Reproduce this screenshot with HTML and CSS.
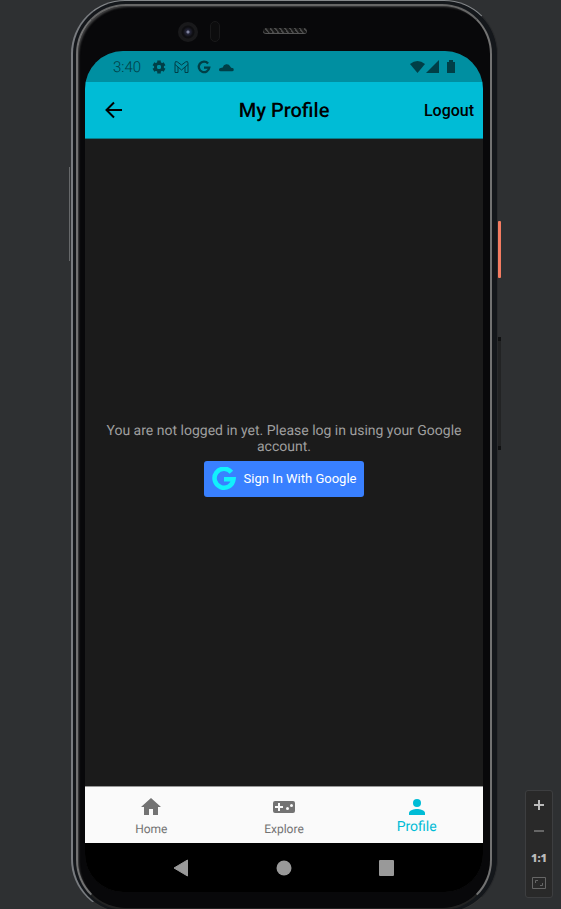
FILE: index.html
```html
<!DOCTYPE html>
<html lang="en">
<head>
<meta charset="utf-8">
<meta name="viewport" content="width=device-width, initial-scale=1">
<title>My Profile</title>
<link rel="stylesheet" href="styles.css">
</head>
<body>
<main class="stage">
  <div class="phone">
    <span class="side-key left-key"></span>
    <span class="side-key power-key"></span>
    <span class="side-key volume-key"></span>
    <div class="rim">
      <div class="bezel">
        <span class="camera"></span>
        <span class="sensor"></span>
        <span class="speaker"></span>
      </div>
      <div class="screen">
        <div class="status">
          <span class="clock">3:40</span>
          <svg class="status-icon" viewBox="0 0 24 24"><g stroke="currentColor" stroke-width="6"><path d="M12 1v6M12 17v6M2.500 6.500l5 3M16.500 14.500l5 3M2.500 17.500l5-3M16.500 9.500l5-3"/></g><circle cx="12" cy="12" r="6" fill="none" stroke="currentColor" stroke-width="5"/><circle cx="12" cy="12" r="3.500" fill="#008fa1"/></svg>
          <svg class="status-icon gmail" viewBox="0 0 15 14"><path fill="none" stroke="currentColor" d="M1 12.500V3Q1 .500 3.500 2L7.500 5l4-3Q14 .500 14 3v9.500h-3V7l-3.500 3L4 7v5.500zM4 7 1 4.500M11 7l3-2.500"/></svg>
          <svg class="status-icon" viewBox="0 0 24 24"><path fill="none" stroke="currentColor" stroke-width="4" d="M19 6a9 9 0 1 0 2 7h-9"/></svg>
          <svg class="status-icon cloud" viewBox="0 0 28 24"><path fill="currentColor" d="M3 20a3 3 0 0 1 0-6q2-1 4-1a7.500 7.500 0 0 1 14-2q1 2 3 3a3 3 0 0 1 1 6z"/></svg>
          <span class="signals">
            <svg width="15" height="14" viewBox="0 0 15 14"><path fill="currentColor" d="M0 4q7.500-6 15 0L7.500 13z"/></svg>
            <svg width="14" height="14" viewBox="0 0 14 14"><path fill="currentColor" d="M13 0v13H0z"/></svg>
            <svg class="battery" width="8" height="14" viewBox="0 0 8 14"><path fill="currentColor" d="M0 2h2V0h4v2h2v11H0z"/></svg>
          </span>
        </div>
        <header class="app-bar">
          <button class="back" type="button" aria-label="Back"><svg width="18" height="18" viewBox="0 0 18 18"><path fill="none" stroke="currentColor" stroke-width="2" d="M17 9H2M9 1.500 1.500 9 9 16.500"/></svg></button>
          <h1>My Profile</h1>
          <button class="logout" type="button">Logout</button>
        </header>
        <section class="content">
          <p>You are not logged in yet. Please log in using your Google account.</p>
          <button class="google" type="button">
            <svg width="24" height="24" viewBox="0 0 24 24"><path fill="none" stroke="currentColor" stroke-width="4.500" d="M19.400 5.200A9.500 9.500 0 1 0 21.500 12.300H12"/></svg>
            <span>Sign In With Google</span>
          </button>
        </section>
        <nav class="tabs">
          <a href="#home"><svg width="24" height="24" viewBox="0 0 24 24"><path fill="currentColor" d="M10 20v-6h4v6h5v-8h3L12 3 2 12h3v8z"/></svg><span>Home</span></a>
          <a href="#explore"><svg width="24" height="24" viewBox="0 0 24 24"><path fill="currentColor" fill-rule="evenodd" d="M21 6H3a2 2 0 0 0-2 2v8a2 2 0 0 0 2 2h18a2 2 0 0 0 2-2V8a2 2 0 0 0-2-2zM11 13H8v3H6v-3H3v-2h3V8h2v3h3zM15.500 15a1.500 1.500 0 1 1 0-3 1.500 1.500 0 0 1 0 3zM19.500 12a1.500 1.500 0 1 1 0-3 1.500 1.500 0 0 1 0 3z"/></svg><span>Explore</span></a>
          <a class="active" href="#profile"><svg width="24" height="24" viewBox="0 0 24 24"><circle cx="12" cy="8" r="4" fill="currentColor"/><path fill="currentColor" d="M4 20v-2c0-2.700 5.300-4 8-4s8 1.300 8 4v2z"/></svg><span>Profile</span></a>
        </nav>
        <div class="system">
          <button type="button" aria-label="System back"><svg width="16" height="18" viewBox="0 0 16 18"><path fill="currentColor" d="M14.500 1v16L1 9z" stroke="currentColor" stroke-linejoin="round"/></svg></button>
          <button type="button" aria-label="System home"><svg width="16" height="16" viewBox="0 0 16 16"><circle cx="8" cy="8" r="7.500" fill="currentColor"/></svg></button>
          <button type="button" aria-label="Recent apps"><svg width="16" height="16" viewBox="0 0 16 16"><rect width="15" height="16" rx="1" fill="currentColor"/></svg></button>
        </div>
      </div>
    </div>
  </div>
  <aside class="zoom">
    <button type="button" aria-label="Zoom in"><svg width="14" height="14" viewBox="0 0 14 14"><path stroke="currentColor" stroke-width="2" d="M2 7h10M7 2v10"/></svg></button>
    <button class="dim" type="button" aria-label="Zoom out"><svg width="14" height="14" viewBox="0 0 14 14"><path stroke="currentColor" stroke-width="2" d="M2 7h10"/></svg></button>
    <button type="button">1:1</button>
    <button class="dim" type="button" aria-label="Fit"><svg width="14" height="12" viewBox="0 0 14 12"><path fill="none" stroke="currentColor" d="M.5.5h13v11H.5zM3.500 6V3.500H6M8 8.500h2.500V6"/></svg></button>
  </aside>
</main>
</body>
</html>
```
FILE: styles.css
```css
* { box-sizing: border-box; }

body {
  margin: 0;
  background: #2e3032;
  font-family: Roboto, "Liberation Sans", sans-serif;
  text-rendering: geometricPrecision;
}

button {
  display: flex;
  align-items: center;
  justify-content: center;
  border: 0;
  padding: 0;
  background: none;
  color: inherit;
  font: inherit;
}

svg { display: block; flex: none; }

.stage {
  position: relative;
  display: flex;
  min-height: 100vh;
  padding: 0 63px 0 71px;
  overflow: hidden;
}

.phone {
  position: relative;
  display: flex;
  flex: 1;
  margin-bottom: -4px;
  padding: 3px 5px 2px 3px;
  border: solid;
  border-width: 1px 1px 1px 2px;
  border-color: #85888b #292a2c #333 #797c80;
  border-radius: 54px;
  background: #14171b;
}

.rim {
  display: flex;
  flex: 1;
  flex-direction: column;
  padding: 0 7px 16px;
  border: 2px solid #727272;
  border-top-color: #666;
  border-bottom-color: #222;
  border-radius: 50px;
  background: #08080a;
  box-shadow: inset 2px 2px 2px -1px #77777788;
}

.side-key { position: absolute; }

.left-key {
  top: 166px;
  left: -4px;
  width: 1px;
  height: 94px;
  background: #66686a;
}

.power-key {
  top: 220px;
  right: -4px;
  width: 3px;
  height: 57px;
  border-radius: 1px;
  background: #f47c62;
}

.volume-key {
  top: 336px;
  right: -4px;
  width: 3px;
  height: 113px;
  border-top: 4px solid #101112;
  border-bottom: 4px solid #101112;
  background: #222324;
}

.bezel {
  display: flex;
  align-items: center;
  height: 45px;
  padding: 0 0 2px 93px;
}

.camera {
  width: 20px;
  height: 20px;
  margin-top: 8px;
  border-radius: 50%;
  background: radial-gradient(circle at 50% 50%, #8084a0 0 1px, #25263a 2px, #0e0e11 5px 6px, #19191b 7px);
}

.sensor {
  width: 10px;
  height: 21px;
  margin: 8px 0 0 12px;
  border: 1px solid #19191a;
  border-radius: 5px;
  background: #0c0c0d;
}

.speaker {
  width: 44px;
  height: 6px;
  margin: 6px 0 0 43px;
  border-radius: 3px;
  border-bottom: 1px solid #555;
  background: repeating-linear-gradient(55deg, #4a4a4a 0 1px, #171717 2px 4px);
}

.screen {
  display: flex;
  flex: 1;
  flex-direction: column;
  overflow: hidden;
  border-radius: 38px;
  background: #1b1b1b;
}

.status {
  display: flex;
  align-items: center;
  gap: 8px;
  height: 31px;
  padding: 1px 28px 0;
  background: #008fa1;
  color: #003f47;
}

.clock {
  margin-right: 3px;
  font-size: 15px;
  font-weight: 300;
  line-height: 18px;
}

.status-icon { width: 14px; height: 14px; }
.gmail, .cloud { width: 15px; }

.signals {
  display: flex;
  gap: 1px;
  margin-left: auto;
}

.battery { margin-left: 6px; }

.app-bar {
  display: grid;
  grid-template-columns: 1fr auto 1fr;
  align-items: center;
  height: 57px;
  padding: 0 9px 0 20px;
  border-bottom: 1px solid #087c89;
  background: #00bcd6;
  color: #000;
}

.back { justify-self: start; }

.app-bar h1 {
  margin: 0 11px 0 0;
  font-size: 20px;
  font-weight: 500;
  line-height: 24px;
}

.logout {
  justify-self: end;
  font-size: 16px;
  font-weight: 500;
}

.content {
  display: flex;
  flex: 1;
  flex-direction: column;
  align-items: center;
  justify-content: center;
  gap: 6px;
  padding: 0 12px 6px;
}

.content p {
  margin: 0;
  color: #9f9f9f;
  font-size: 14px;
  line-height: 16px;
  text-align: center;
}

.google {
  gap: 8px;
  height: 36px;
  padding: 0 8px;
  border-radius: 3px;
  background: #3980ff;
  color: #fff;
  font-size: 13px;
}

.google svg { color: #12f1fc; }

.tabs {
  display: grid;
  grid-template-columns: repeat(3, 1fr);
  height: 57px;
  border-top: 1px solid #999;
  background: #fafafa;
}

.tabs a {
  display: flex;
  flex-direction: column;
  align-items: center;
  padding-top: 8px;
  color: #737373;
  font-size: 12px;
  line-height: 20px;
  text-decoration: none;
}

.tabs .active {
  color: #00bcd6;
  font-size: 14px;
  line-height: 17px;
}

.system {
  display: flex;
  align-items: center;
  justify-content: center;
  gap: 87px;
  height: 49px;
  background: #000;
  color: #999;
}

.zoom {
  position: absolute;
  right: 8px;
  bottom: 11px;
  display: grid;
  grid-template-rows: repeat(4, 26px);
  width: 28px;
  padding: 1px 0;
  border: 1px solid #3d3e40;
  border-radius: 3px;
  background: #292929;
  color: #bbb;
  font-family: "Open Sans", sans-serif;
  font-size: 11px;
  font-weight: 800;
}

.zoom .dim { color: #666; }
```
